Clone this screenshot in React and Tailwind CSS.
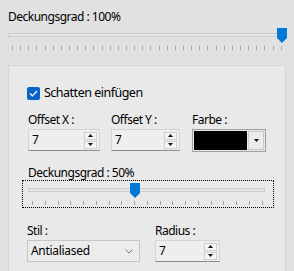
const font = { fontFamily: '"Noto Sans", "Liberation Sans", sans-serif' }

function Ticks({ count, className }) {
  return (
    <div className={`flex justify-between ${className}`}>
      {Array.from({ length: count }).map((_, i) => (
        <div key={i} className="w-px h-[4px] bg-[#a6a6a6]" />
      ))}
    </div>
  )
}

function Thumb({ className }) {
  return (
    <svg width="10" height="15" viewBox="0 0 10 15" className={`absolute ${className}`}>
      <polygon points="0,0 10,0 10,10 5,15 0,10" fill="#0078d7" />
    </svg>
  )
}

function Spinner() {
  return (
    <div className="flex flex-col gap-px mr-[2px]">
      <div className="w-[13px] h-[8px] border border-[#cfcfcf] bg-[#f4f4f4] flex items-center justify-center">
        <svg width="5" height="3" viewBox="0 0 5 3"><polygon points="2.5,0 5,3 0,3" fill="#111" /></svg>
      </div>
      <div className="w-[13px] h-[8px] border border-[#cfcfcf] bg-[#f4f4f4] flex items-center justify-center">
        <svg width="5" height="3" viewBox="0 0 5 3"><polygon points="0,0 5,0 2.5,3" fill="#111" /></svg>
      </div>
    </div>
  )
}

function NumberBox({ value, width }) {
  return (
    <div className={`${width} h-[22px] flex items-center justify-between bg-[#eeeeee] border border-[#d4d4d4] border-b-[#8a8a8a] pl-[3px]`}>
      <span className="text-[12px] leading-none text-black">{value}</span>
      <Spinner />
    </div>
  )
}

function Label({ children }) {
  return <div className="text-[12px] leading-[16px] tracking-[-0.5px] text-black">{children}</div>
}

export default function App() {
  return (
    <div className="w-[294px] h-[271px] bg-[#e1e1e1] overflow-hidden" style={font}>
      <div className="pt-[9px] pl-[8px]">
        <Label>Deckungsgrad : 100%</Label>
      </div>

      {/* top slider */}
      <div className="relative ml-[8px] w-[278px] h-[31px] mt-[3px]">
        <div className="absolute left-0 right-0 top-[5px] h-[4px] border border-[#cccccc] bg-[#e6e6e6]" />
        <Thumb className="left-[269px] top-0" />
        <Ticks count={34} className="absolute left-[4px] right-[4px] top-[18px]" />
      </div>

      {/* panel */}
      <div className="mx-[8px] mt-[6px] h-[220px] border border-[#d6d6d6] bg-[#e9e9e9] pl-[19px] pt-[19px]">
        <div className="flex items-center gap-[4px] h-[16px] -ml-[1px]">
          <div className="w-[13px] h-[13px] rounded-[2px] bg-[#0a64c8] flex items-center justify-center">
            <svg width="9" height="7" viewBox="0 0 9 7">
              <polyline points="1,3.5 3.5,6 8,1" fill="none" stroke="white" strokeWidth="1.2" />
            </svg>
          </div>
          <span className="text-[12.5px] leading-[16px] tracking-[-0.5px] text-black">Schatten einfügen</span>
        </div>

        <div className="flex mt-[11px]">
          <div className="w-[83px]">
            <Label>Offset X :</Label>
            <div className="mt-px"><NumberBox value="7" width="w-[72px]" /></div>
          </div>
          <div className="w-[81px]">
            <Label>Offset Y :</Label>
            <div className="mt-px"><NumberBox value="7" width="w-[69px]" /></div>
          </div>
          <div>
            <Label>Farbe :</Label>
            <div className="mt-px w-[74px] h-[23px] border border-[#a0a0a0] bg-[#e9e9e9] flex p-px">
              <div className="flex-1 bg-black" />
              <div className="w-[16px] ml-px border border-[#c8c8c8] bg-[#ececec] flex items-center justify-center">
                <svg width="5" height="3" viewBox="0 0 5 3"><polygon points="0,0 5,0 2.5,3" fill="#111" /></svg>
              </div>
            </div>
          </div>
        </div>

        <div className="mt-[13px]">
          <Label>Deckungsgrad : 50%</Label>
          <div className="relative -ml-[6px] w-[252px] h-[28px] border border-dotted border-black -mt-px">
            <div className="absolute left-[5px] w-[237px] top-[7px] h-[4px] border border-[#cccccc] bg-[#e6e6e6]" />
            <Thumb className="left-[107px] top-[2px]" />
            <Ticks count={19} className="absolute left-[9px] w-[231px] top-[20px]" />
          </div>
        </div>

        <div className="flex mt-[15px] -ml-[1px]">
          <div className="w-[128px]">
            <Label>Stil :</Label>
            <div className="mt-px w-[113px] h-[22px] border border-[#c6c6c6] bg-[#ececec] flex items-center justify-between pl-[3px] pr-[6px]">
              <span className="text-[12px] leading-none tracking-[-0.3px] text-black">Antialiased</span>
              <svg width="8" height="5" viewBox="0 0 8 5">
                <polyline points="0.5,0.5 4,4 7.5,0.5" fill="none" stroke="#777" strokeWidth="1" />
              </svg>
            </div>
          </div>
          <div>
            <Label>Radius :</Label>
            <div className="mt-px"><NumberBox value="7" width="w-[65px]" /></div>
          </div>
        </div>
      </div>
    </div>
  )
}
